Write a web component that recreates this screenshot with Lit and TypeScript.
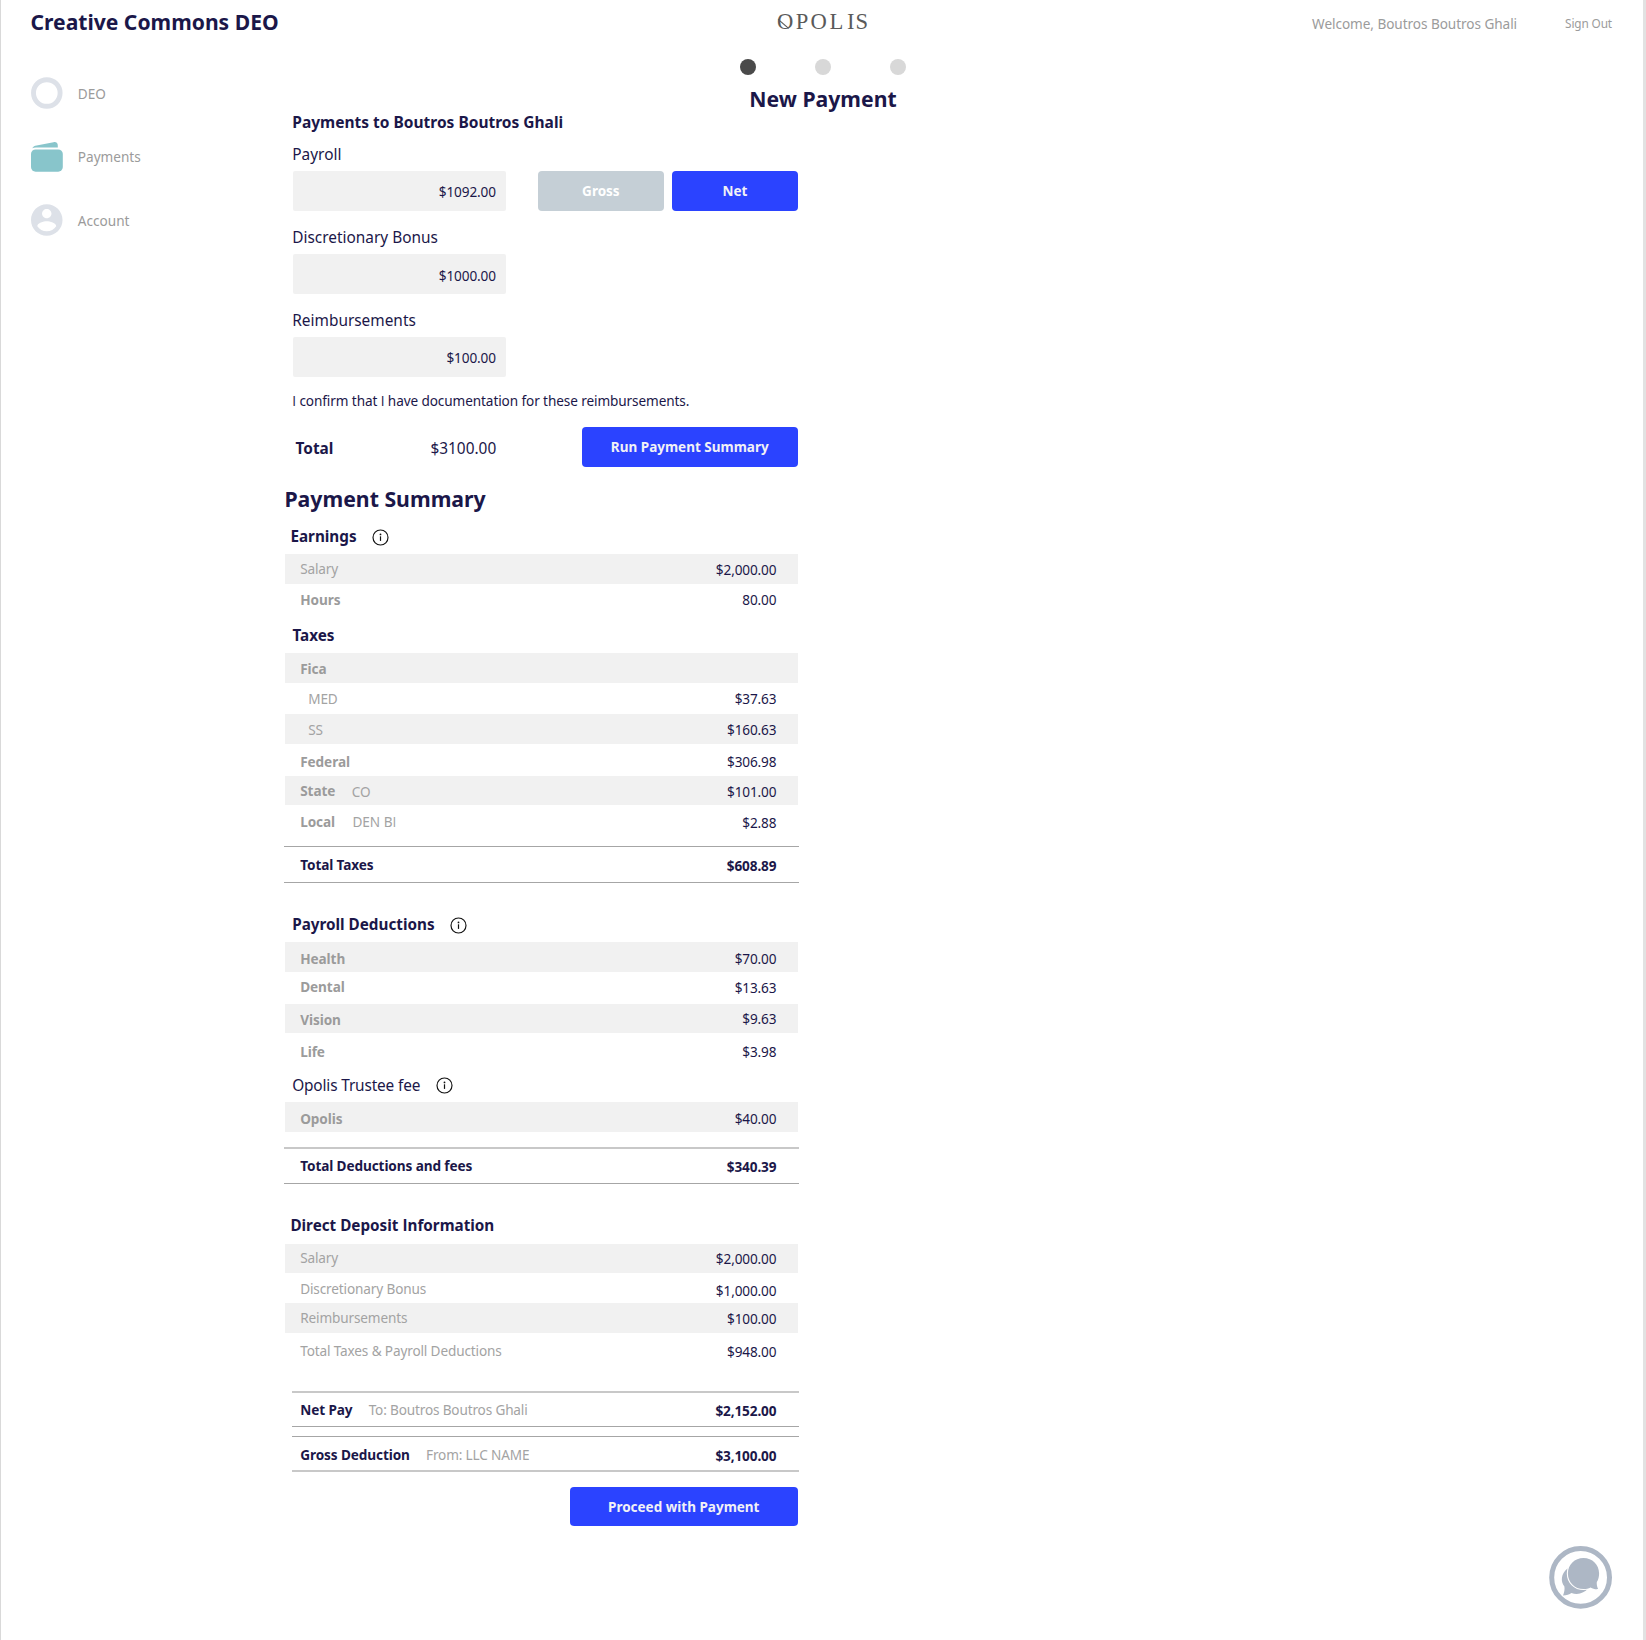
import { LitElement, html, css, nothing, TemplateResult } from "lit";
import { customElement, property } from "lit/decorators.js";
import { classMap } from "lit/directives/class-map.js";
import { styleMap } from "lit/directives/style-map.js";

interface Row {
  label: string | TemplateResult;
  value?: string;
  note?: string | TemplateResult;
  height: number;
  /* distance of label, note and value from the top of the row */
  l: number;
  n?: number;
  v?: number;
  band?: boolean;
  light?: boolean;
  indent?: boolean;
}

/* Capital I without serifs */
const I = html`<span class="cap-i">I</span>`;

const earnings: Row[] = [
  { label: "Salary", value: "$2,000.00", height: 30, l: 5, v: 6, band: true, light: true },
  { label: "Hours", value: "80.00", height: 41, l: 6, v: 6 },
];

const taxes: Row[] = [
  { label: "Fica", height: 30, l: 6, band: true },
  { label: "MED", value: "$37.63", height: 31, l: 6, v: 6, light: true, indent: true },
  { label: "SS", value: "$160.63", height: 30, l: 6, v: 6, band: true, light: true, indent: true },
  { label: "Federal", value: "$306.98", height: 32, l: 8, v: 8 },
  { label: "State", note: "CO", value: "$101.00", height: 29, l: 5, n: 6, v: 6, band: true },
  { label: "Local", note: html`<span class="nudge">DEN B${I}</span>`, value: "$2.88", height: 41, l: 7, n: 7, v: 8 },
];

const deductions: Row[] = [
  { label: "Health", value: "$70.00", height: 30, l: 7, v: 7, band: true },
  { label: "Dental", value: "$13.63", height: 32, l: 5, v: 6 },
  { label: "Vision", value: "$9.63", height: 29, l: 6, v: 5, band: true },
  { label: "Life", value: "$3.98", height: 42, l: 9, v: 9 },
];

const trustee: Row[] = [
  { label: "Opolis", value: "$40.00", height: 30, l: 7, v: 7, band: true },
];

const deposit: Row[] = [
  { label: "Salary", value: "$2,000.00", height: 29, l: 4, v: 5, band: true, light: true },
  { label: "Discretionary Bonus", value: "$1,000.00", height: 30, l: 6, v: 8, light: true },
  { label: "Reimbursements", value: "$100.00", height: 30, l: 5, v: 6, band: true, light: true },
  { label: "Total Taxes & Payroll Deductions", value: "$948.00", height: 58, l: 8, v: 9, light: true },
];

@customElement("info-icon")
class InfoIcon extends LitElement {
  static styles = css`
    :host { display: block; width: 17px; height: 17px; }
    svg { display: block; }
  `;
  render() {
    return html`<svg width="17" height="17" viewBox="0 0 17 17">
      <circle cx="8.5" cy="8.5" r="7.5" fill="none" stroke="#111" stroke-width="1.15" />
      <circle cx="8.5" cy="5.4" r="0.9" fill="#111" />
      <rect x="7.9" y="7.3" width="1.2" height="4.6" fill="#111" />
    </svg>`;
  }
}

@customElement("summary-table")
class SummaryTable extends LitElement {
  @property({ attribute: false }) rows: Row[] = [];

  static styles = css`
    :host { display: block; width: 513px; }
    .row { display: flex; align-items: flex-start; padding: 0 21.6px 0 15.2px; box-sizing: border-box; }
    .band { background: #f1f1f1; }
    .cell { line-height: 20px; font-size: 13.6px; letter-spacing: -0.13px; white-space: nowrap; }
    .label { font-weight: 700; color: #9b9b9b; letter-spacing: -0.08px; }
    .light, .note { font-weight: 400; color: #a3a3a3; letter-spacing: -0.14px; }
    .indent { padding-left: 8px; }
    .note { padding-left: 16.4px; }
    .nudge { padding-left: 0.9px; letter-spacing: 0; }
    .value { margin-left: auto; color: #1b1749; }
    .cap-i { font-family: "Open Sans", sans-serif; }
  `;

  render() {
    return this.rows.map(
      (r) => html`<div class=${classMap({ row: true, band: !!r.band })} style=${styleMap({ height: `${r.height}px` })}>
        <span class=${classMap({ cell: true, label: true, light: !!r.light, indent: !!r.indent })}
          style=${styleMap({ marginTop: `${r.l}px` })}>${r.label}</span>
        ${r.note ? html`<span class="cell note" style=${styleMap({ marginTop: `${r.n}px` })}>${r.note}</span>` : nothing}
        ${r.value ? html`<span class="cell value" style=${styleMap({ marginTop: `${r.v}px` })}>${r.value}</span>` : nothing}
      </div>`
    );
  }
}

@customElement("app-root")
class AppRoot extends LitElement {
  static styles = css`
    :host {
      display: block;
      position: relative;
      box-sizing: border-box;
      width: 1646px;
      height: 1640px;
      overflow: hidden;
      background: #fff;
      color: #1b1749;
      font-family: "Noto Sans", "Open Sans", sans-serif;
      border-left: 1px solid #d9d9d9;
      border-right: 3px solid #e2e2e2;
    }
    .cap-i { font-family: "Open Sans", sans-serif; }
    header {
      display: grid;
      grid-template-columns: 1fr 92px 1fr;
      height: 46px;
      padding: 0 31px 0 29.5px;
    }
    h1, h2, h3 { margin: 0; font-weight: 700; white-space: nowrap; }
    .brand { font-size: 21.1px; line-height: 28px; padding-top: 8px; }
    .logo { display: block; margin: 5px 0 0 2px; }
    .logo-text { font-family: "Liberation Serif", serif; font-size: 22.6px; }
    .user { display: flex; justify-content: flex-end; color: #9b9b9b; white-space: nowrap; }
    .welcome { font-size: 13.6px; letter-spacing: -0.06px; line-height: 20px; padding-top: 14px; }
    .signout { font-size: 11.8px; letter-spacing: -0.12px; line-height: 20px; padding-top: 13px; margin-left: 48px; }

    .shift { width: 1644px; }
    .steps { display: flex; justify-content: center; gap: 59px; padding-top: 12.5px; }
    .dot { width: 16px; height: 16px; border-radius: 50%; background: #d8d8d8; }
    .dot.on { background: #4a4a4a; }
    .page-title { text-align: center; font-size: 21.2px; line-height: 28px; margin-top: 10.5px; }

    .body { display: grid; grid-template-columns: 283px 515px; align-items: start; }
    nav { margin-top: -36px; padding-left: 30px; display: flex; flex-direction: column; gap: 31.6px; }
    .item { display: flex; align-items: center; height: 32px; color: #9b9b9b; font-size: 13.6px; line-height: 20px; }
    .item svg { display: block; margin-right: 14.8px; }
    .item span { padding-top: 1.6px; }

    main { display: flex; flex-direction: column; margin-top: -1px; }
    .form { padding-left: 8.7px; display: flex; flex-direction: column; }
    .to { font-size: 15.5px; line-height: 20px; margin-left: -0.4px; }
    .fl { font-size: 15.4px; line-height: 20px; margin: 17.5px 0 6px -0.4px; }
    .fl.first { margin-top: 13px; }
    .field {
      box-sizing: border-box; width: 213.3px; height: 39.5px; border-radius: 2px; background: #f1f1f1;
      text-align: right; font-size: 13.6px; letter-spacing: -0.1px; line-height: 20px; padding: 11px 10px 0 0;
    }
    .field.low { padding-top: 12px; }
    .line { display: flex; }
    .btn {
      height: 39.5px; border-radius: 4px; background: #2b43ff; color: #f1f1f6;
      font-weight: 700; font-size: 13.5px; line-height: 20px; padding: 0; box-sizing: border-box; text-align: center;
      font-family: inherit; border: 0; display: block;
    }
    .toggle { width: 126px; }
    .gross { background: #c5cfd6; color: #fff; margin-left: 31.9px; margin-right: 8px; }
    .confirm { font-size: 13.6px; letter-spacing: -0.1px; line-height: 20px; white-space: nowrap; margin: 14.5px 0 16px -0.4px; }
    .total {
      font-size: 15.4px; line-height: 20px; display: flex; width: 213.3px; justify-content: space-between;
      padding: 12px 9.8px 0 2.8px; box-sizing: border-box;
    }
    .run { width: 216px; margin-left: 75.8px; }

    .sum-title { font-size: 21.25px; line-height: 28px; margin: 18.5px 0 0 0.4px; }
    .head { display: flex; font-size: 15.25px; line-height: 20px; font-weight: 700; white-space: nowrap; }
    .head info-icon { margin: 3px 0 -1px 15.5px; }
    .head.regular { font-weight: 400; font-size: 15.4px; letter-spacing: -0.15px; }
    .head.regular span { padding-top: 1px; margin-bottom: -1px; }
    .head.regular info-icon { margin: 2px 0 0 16px; }
    .earnings-head { margin: 13px 0 8px 6.4px; }
    .taxes-head { margin: 0 0 8px 8.5px; }
    .payroll-head { margin: 31px 0 8px 8.2px; }
    .trustee-head { margin: 0 0 7px 8.2px; }
    .deposit-head { margin: 31px 0 9px 6.4px; }
    summary-table { margin-left: 1px; }

    .sum {
      display: flex; align-items: flex-start; box-sizing: border-box; height: 37px;
      border-top: 1px solid #a6a6a6; border-bottom: 1px solid #a6a6a6;
      padding: 8px 22.6px 0 16.2px; font-size: 13.6px; letter-spacing: -0.1px; line-height: 20px; font-weight: 700; white-space: nowrap;
    }
    .sum .amount { margin-left: auto; padding-top: 1px; letter-spacing: -0.13px; }
    .sum .who { font-weight: 400; color: #a3a3a3; margin-left: 16.2px; letter-spacing: -0.16px; }
    .soft-top { border-top: 2px solid #c8c8c8; padding-top: 7px; }
    .soft-bottom { border-bottom: 2px solid #c8c8c8; }
    .fees { margin-top: 15px; }
    .inset { margin-left: 8px; padding-left: 8.2px; height: 36px; }
    .gap { margin-top: 9px; }
    .proceed { width: 228.5px; height: 39px; margin: 15px 0 0 285.5px; }

    .chat { position: absolute; left: 1548px; top: 1545px; }
  `;

  render() {
    return html`
      <header>
        <h1 class="brand">Creative Commons DEO</h1>
        <svg class="logo" width="100" height="34" viewBox="0 0 100 34" fill="#5a5a5a">
          <text class="logo-text" y="23.8" x="0 18.8 33.6 52.4 70 78.6">OPOLIS</text>
          <path d="M1.2 14.4 L11.6 23.4" stroke="#5a5a5a" stroke-width="1.2" />
        </svg>
        <div class="user">
          <span class="welcome">Welcome, Boutros Boutros Ghali</span>
          <span class="signout">Sign Out</span>
        </div>
      </header>
      <div class="shift">
        <div class="steps"><i class="dot on"></i><i class="dot"></i><i class="dot"></i></div>
        <h2 class="page-title">New Payment</h2>
      </div>
      <div class="body">
        <nav>
          <div class="item">
            <svg width="32" height="32"><circle cx="15.8" cy="16" r="13.3" fill="none" stroke="#dde1e8" stroke-width="4.9" /></svg>
            <span>DEO</span>
          </div>
          <div class="item">
            <svg width="32" height="32" fill="#88c5cb">
              <rect x="0" y="8.5" width="31.8" height="22.2" rx="4.6" />
              <path d="M1.2 7.3 C2.2 5.7 3.6 4.9 5.6 4.6 L22.5 1.2 C25.4 0.7 26.8 2.1 26.8 4.7 V6.5 H5 C3.4 6.5 2.2 6.8 1.2 7.3 Z" />
            </svg>
            <span>Payments</span>
          </div>
          <div class="item">
            <svg width="32" height="32" viewBox="2 1.9 20.3 20.3" fill="#dde1e8">
              <path d="M12 2C6.48 2 2 6.48 2 12s4.48 10 10 10 10-4.48 10-10S17.52 2 12 2zm0 3c1.66 0 3 1.34 3 3s-1.34 3-3 3-3-1.34-3-3 1.34-3 3-3zm0 14.2c-2.5 0-4.71-1.28-6-3.22.03-1.99 4-3.08 6-3.08 1.99 0 5.97 1.09 6 3.08-1.29 1.94-3.5 3.22-6 3.22z" />
            </svg>
            <span>Account</span>
          </div>
        </nav>
        <main>
          <section class="form">
            <h3 class="to">Payments to Boutros Boutros Ghali</h3>
            <label class="fl first">Payroll</label>
            <div class="line">
              <div class="field">$1092.00</div>
              <button class="btn toggle gross">Gross</button>
              <button class="btn toggle">Net</button>
            </div>
            <label class="fl">Discretionary Bonus</label>
            <div class="field low">$1000.00</div>
            <label class="fl">Reimbursements</label>
            <div class="field">$100.00</div>
            <div class="confirm">${I} confirm that ${I} have documentation for these reimbursements.</div>
            <div class="line">
              <div class="total"><b>Total</b><span>$3100.00</span></div>
              <button class="btn run">Run Payment Summary</button>
            </div>
          </section>

          <h2 class="sum-title">Payment Summary</h2>
          <div class="head earnings-head">Earnings<info-icon></info-icon></div>
          <summary-table .rows=${earnings}></summary-table>
          <div class="head taxes-head">Taxes</div>
          <summary-table .rows=${taxes}></summary-table>
          <div class="sum">Total Taxes<span class="amount">$608.89</span></div>

          <div class="head payroll-head">Payroll Deductions<info-icon></info-icon></div>
          <summary-table .rows=${deductions}></summary-table>
          <div class="head regular trustee-head"><span>Opolis Trustee fee</span><info-icon></info-icon></div>
          <summary-table .rows=${trustee}></summary-table>
          <div class="sum soft-top fees">Total Deductions and fees<span class="amount">$340.39</span></div>

          <div class="head deposit-head"><span>Direct Deposit ${I}nformation</span></div>
          <summary-table .rows=${deposit}></summary-table>
          <div class="sum soft-top inset">Net Pay<span class="who">To: Boutros Boutros Ghali</span><span class="amount">$2,152.00</span></div>
          <div class="sum soft-bottom inset gap">Gross Deduction<span class="who">From: LLC NAME</span><span class="amount">$3,100.00</span></div>
          <button class="btn proceed">Proceed with Payment</button>
        </main>
      </div>
      <svg class="chat" width="64" height="64" viewBox="0 0 64 64" fill="#adb7c5">
        <circle cx="31.6" cy="32.4" r="28.9" fill="none" stroke="#adb7c5" stroke-width="5" />
        <path d="M18.5 23.5 C12 28.5 11.3 36.5 15.4 41.6 C15.9 44.5 15.2 47.5 14 50.6 C17.5 50.3 20.5 49.5 22.4 48 C29 50.3 35.5 48 39 43.6 Z" />
        <path d="M34.5 13 C25.6 13 18.9 19.7 18.9 28.4 C18.9 37.1 25.6 44 34.5 44 C37 44 39.6 43.4 41.6 42.4 C43.8 43.8 46.5 44.4 49.1 44.1 C48 41.8 47.6 39.5 47.8 37 C49.4 34.5 50.1 31.6 50.1 28.4 C50.1 19.7 43.4 13 34.5 13 Z" stroke="#fff" stroke-width="2.2" paint-order="stroke" />
      </svg>
    `;
  }
}
